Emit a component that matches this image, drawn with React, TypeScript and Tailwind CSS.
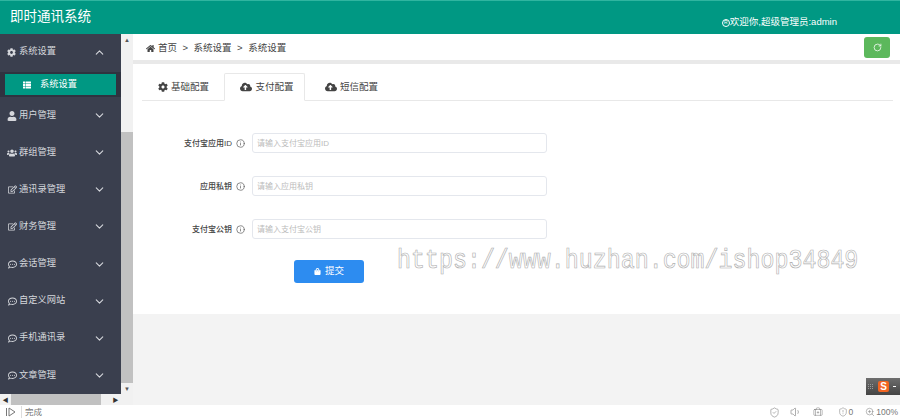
import { FaHome, FaCog, FaUser, FaUsers, FaRegEdit, FaRegCommentDots, FaCloudUploadAlt, FaShoppingBag, FaThList } from "react-icons/fa";
import { ChevronDown, ChevronUp, Info, RotateCw, ShieldCheck, Volume1, BriefcaseMedical, ZoomIn, ShieldAlert } from "lucide-react";

const menus = [
  { label: "用户管理", icon: <FaUser size={10} /> },
  { label: "群组管理", icon: <FaUsers size={10} /> },
  { label: "通讯录管理", icon: <FaRegEdit size={9} /> },
  { label: "财务管理", icon: <FaRegEdit size={9} /> },
  { label: "会话管理", icon: <FaRegCommentDots size={9} /> },
  { label: "自定义网站", icon: <FaRegCommentDots size={9} /> },
  { label: "手机通讯录", icon: <FaRegCommentDots size={9} /> },
  { label: "文章管理", icon: <FaRegCommentDots size={9} /> },
];

const fields = [
  { label: "支付宝应用ID", hint: "请输入支付宝应用ID" },
  { label: "应用私钥", hint: "请输入应用私钥" },
  { label: "支付宝公钥", hint: "请输入支付宝公钥" },
];

const tabs = [
  { label: "基础配置", icon: <FaCog size={10} />, box: "w-[82px] pl-[1px]" },
  { label: "支付配置", icon: <FaCloudUploadAlt size={12} />, box: "w-[81px] pl-[5px]", active: true },
  { label: "短信配置", icon: <FaCloudUploadAlt size={12} />, box: "w-[88px] pl-[5px]" },
];

function Sidebar() {
  return (
    <div className="flex w-[133px] shrink-0 flex-col">
      <div className="flex min-h-0 flex-1">
        <nav className="w-[121px] bg-[#3a3f4e] text-[9.25px] text-[#d5d7dc]">
          <div className="flex h-[38px] items-center pb-[2px] pl-[7px] pr-[15px]">
            <FaCog size={9} />
            <span className="ml-[3px] flex-1">系统设置</span>
            <ChevronUp size={13} />
          </div>
          <div className="h-[25px] bg-[#2f3340] px-[5px] pt-[2px]">
            <div className="flex h-[21px] w-[111px] items-center bg-[#009883] pl-[18px] text-white">
              <FaThList size={8} />
              <span className="ml-[9px]">系统设置</span>
            </div>
          </div>
          {menus.map((m) => (
            <div key={m.label} className="flex h-[37.15px] items-center pl-[7px] pr-[15px]">
              <span className="flex w-[10px] justify-center">{m.icon}</span>
              <span className="ml-[2px] flex-1 whitespace-nowrap">{m.label}</span>
              <ChevronDown size={13} />
            </div>
          ))}
        </nav>
        <div className="flex w-[12px] flex-col items-center bg-[#f1f1f1] text-[#555]">
          <div className="flex h-[12px] items-center justify-center text-[6px] leading-none">▲</div>
          <div className="mt-[86px] h-[251px] w-full bg-[#c1c1c1]" />
          <div className="flex flex-1 items-center justify-center text-[6px] leading-none">▼</div>
        </div>
      </div>
      <div className="flex h-[11px] items-center bg-[#f1f1f1] text-[#333]">
        <span className="w-[11px] text-center text-[6px] leading-none">◀</span>
        <div className="h-full w-[90px] bg-[#c1c1c1]" />
        <span className="ml-[9px] w-[11px] text-center text-[6px] leading-none">▶</span>
      </div>
    </div>
  );
}

function Breadcrumb() {
  return (
    <div className="flex h-[26px] items-center justify-between bg-white pl-[13px] pr-[10px] text-[9.5px] text-[#444]">
      <div className="mt-[2px] flex items-center">
        <FaHome size={9} />
        <span className="ml-[3px]">首页</span>
        <span className="mx-[5.5px]">&gt;</span>
        <span>系统设置</span>
        <span className="mx-[5.5px]">&gt;</span>
        <span>系统设置</span>
      </div>
      <div className="flex h-[21px] w-[26px] items-center justify-center rounded-[3px] bg-[#5cb85c] text-white">
        <RotateCw size={9} />
      </div>
    </div>
  );
}

function Tabs() {
  return (
    <div className="ml-[9px] mr-[7px] flex h-[28px] border-b border-[#e8e8e8] text-[9.5px] text-[#444]">
      {tabs.map((t) => (
        <div
          key={t.label}
          className={`${t.box} -mb-px flex h-[28px] items-center justify-center gap-[3px] ${
            t.active ? "rounded-t-[2px] border border-[#e8e8e8] border-b-white bg-white" : ""
          }`}
        >
          {t.icon}
          <span>{t.label}</span>
        </div>
      ))}
    </div>
  );
}

function Form() {
  return (
    <div className="mt-[32px] flex flex-col gap-[23px] text-[8px]">
      {fields.map((f) => (
        <div key={f.label} className="flex h-[20px] items-center">
          <label className="w-[99px] shrink-0 pt-px text-right font-medium text-[#444]">{f.label}</label>
          <Info size={9} className="ml-[4px] shrink-0 text-[#666]" />
          <div className="ml-[7px] flex h-[20px] w-[295px] items-center rounded-[3px] border border-[#e4e7ed] bg-white pl-[4px] pt-px text-[#bbb]">
            {f.hint}
          </div>
        </div>
      ))}
      <button className="ml-[161px] -mt-[2px] flex h-[23px] w-[70px] items-center justify-center gap-[4px] rounded-[3px] bg-[#2d8cf0] text-[9.5px] text-white">
        <FaShoppingBag size={7} />
        <span>提交</span>
      </button>
    </div>
  );
}

function StatusBar() {
  return (
    <div className="flex h-[14px] items-center bg-white pl-[6px] pr-[2px] text-[8.5px] text-[#777]">
      <svg width="10" height="10" viewBox="0 0 10 10" fill="none" stroke="#777" strokeWidth="1">
        <path d="M0.5 1v8M3 1l6 4-6 4z" />
      </svg>
      <span className="ml-[5px] border-l border-[#ddd] pl-[3px]">完成</span>
      <div className="ml-auto flex items-center">
        <ShieldCheck size={11} strokeWidth={1.2} />
        <Volume1 size={12} strokeWidth={1.2} className="ml-[10px]" />
        <BriefcaseMedical size={10} strokeWidth={1.2} className="ml-[11px]" />
        <ShieldAlert size={10} strokeWidth={1.2} className="ml-[15px]" />
        <span className="ml-[1px]">0</span>
        <ZoomIn size={10} strokeWidth={1.2} className="ml-[12px]" />
        <span className="ml-[1px]">100%</span>
      </div>
    </div>
  );
}

export default function App() {
  return (
    <div className="relative flex h-[419px] w-[900px] flex-col overflow-hidden bg-[#f3f3f3] [font-family:'Liberation_Sans','Noto_Sans_CJK_SC',sans-serif]">
      <header className="flex h-[34px] shrink-0 items-center justify-between border-t border-[#2fb5a0] bg-[#009883] pl-[10px] pr-[63px] text-white">
        <span className="text-[13.5px]">即时通讯系统</span>
        <span className="mt-[10px] flex items-center text-[9.5px]">
          <span className="flex h-[8px] w-[8px] items-center justify-center rounded-full border border-white text-[5px]">R</span>
          欢迎你,超级管理员:admin
        </span>
      </header>
      <div className="flex min-h-0 flex-1">
        <Sidebar />
        <main className="min-w-0 flex-1">
          <Breadcrumb />
          <div className="h-[4px] bg-[#e9e9e9]" />
          <div className="h-[250px] bg-white pt-[9px]">
            <Tabs />
            <Form />
          </div>
        </main>
      </div>
      <StatusBar />

      {/* Site watermark laid over the form */}
      <div className="pointer-events-none absolute left-[397px] top-[244px] origin-top scale-y-[1.2] whitespace-nowrap text-[23.3px] leading-[28px] text-white/60 [font-family:'Liberation_Mono',monospace] [-webkit-text-stroke:0.6px_#b0b0b0]">
        https://www.huzhan.com/ishop34849
      </div>

      {/* Input method toolbar pinned to the corner */}
      <div className="absolute left-[866px] top-[378px] flex h-[17px] w-[34px] items-center bg-gradient-to-b from-[#6e6e6e] to-[#444] pl-[2px]">
        <span className="grid grid-cols-3 gap-px">
          {Array.from({ length: 9 }, (_, i) => (
            <span key={i} className="h-px w-px bg-[#999]" />
          ))}
        </span>
        <span className="ml-[5px] flex h-[11px] w-[11px] items-center justify-center rounded-[2px] bg-[#f26522] text-[10px] font-bold leading-none text-white">
          S
        </span>
        <span className="ml-[4px] h-px w-[3px] bg-white" />
      </div>
    </div>
  );
}
